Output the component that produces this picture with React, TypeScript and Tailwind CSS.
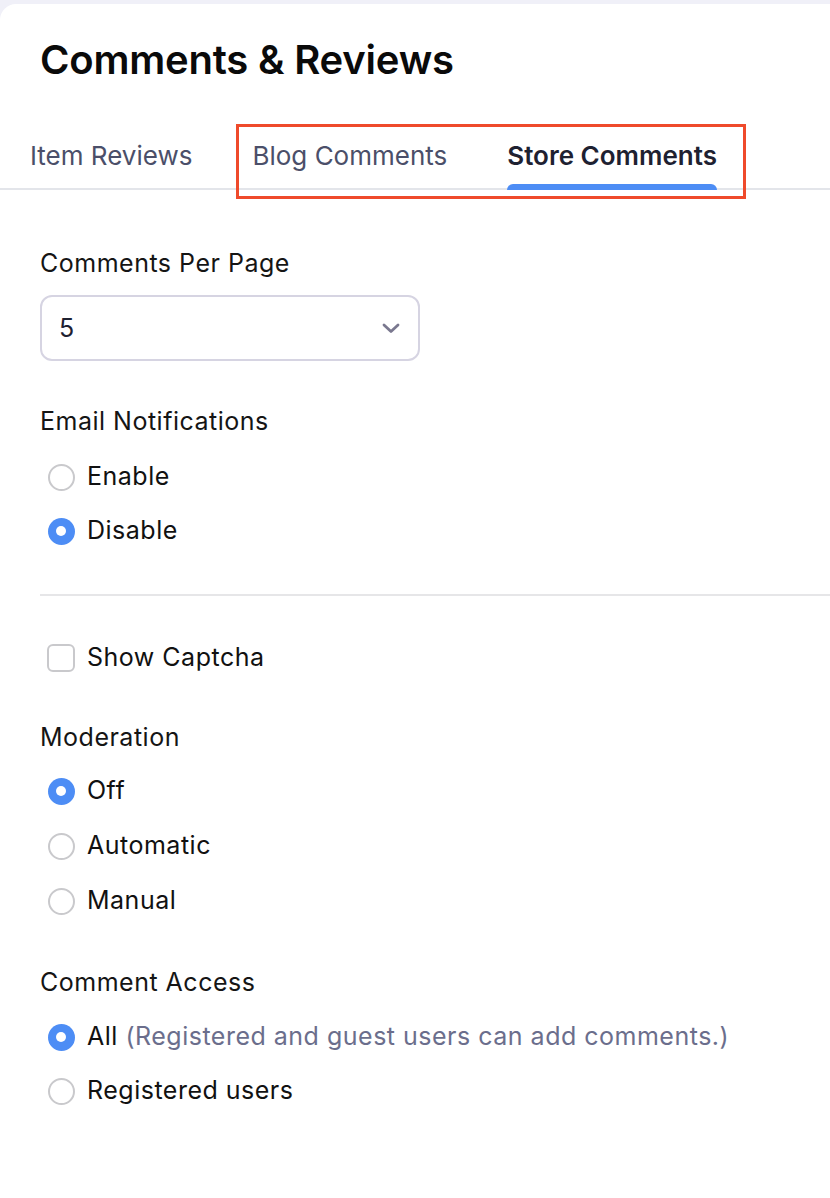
import { useState } from 'react'

type Option = { value: string; label: string; hint?: string }

function Radio({ checked, label, hint, onClick }: { checked: boolean; label: string; hint?: string; onClick: () => void }) {
  return (
    <div className="flex h-8 items-center cursor-pointer" onClick={onClick}>
      <span className="ml-[7px] flex h-7 w-7 shrink-0 items-center justify-center">
        {checked ? (
          <span className="flex h-[27px] w-[27px] items-center justify-center rounded-full bg-[#4d8df5]">
            <span className="h-2.5 w-2.5 rounded-full bg-white" />
          </span>
        ) : (
          <span className="h-[27px] w-[27px] rounded-full border-2 border-[#c9c9cc] bg-white" />
        )}
      </span>
      <span className="ml-[12px] text-[25px] tracking-[0.5px] text-[#111111]">
        {label}
        {hint && <span className="text-[#6b6e8c]"> {hint}</span>}
      </span>
    </div>
  )
}

function RadioGroup({ options, value, onChange, gap }: { options: Option[]; value: string; onChange: (v: string) => void; gap: string }) {
  return (
    <div className={`flex flex-col ${gap}`}>
      {options.map((o) => (
        <Radio key={o.value} checked={value === o.value} label={o.label} hint={o.hint} onClick={() => onChange(o.value)} />
      ))}
    </div>
  )
}

export default function App() {
  const [tab, setTab] = useState('store')
  const [email, setEmail] = useState('disable')
  const [captcha, setCaptcha] = useState(false)
  const [moderation, setModeration] = useState('off')
  const [access, setAccess] = useState('all')

  const tabs = [
    { id: 'item', label: 'Item Reviews' },
    { id: 'blog', label: 'Blog Comments' },
    { id: 'store', label: 'Store Comments' },
  ]

  return (
    <div className="min-h-[1198px] bg-[#f0f0f8] pt-1 font-['Inter','Noto_Sans',sans-serif]">
      <div className="min-h-[1194px] rounded-tl-2xl bg-white pt-8">
        <h1 className="pl-10 text-[40px] leading-[48px] font-semibold text-[#0a0a0a] tracking-[-0.2px]">
          Comments &amp; Reviews
        </h1>

        {/* Tabs */}
        <div className="relative mt-10 flex gap-[60px] border-b-2 border-[#e3e5ea] pl-[30px] pt-4 pb-4">
          {tabs.map((t) => {
            const active = t.id === tab
            return (
              <button
                key={t.id}
                onClick={() => setTab(t.id)}
                className={`relative text-[26px] leading-8 ${active ? 'font-semibold text-[#1e2131]' : 'text-[#4b4f69]'}`}
              >
                {t.label}
                {active && <span className="absolute left-0 right-0 bottom-[-18px] h-1.5 rounded-t-md bg-[#4d8df5]" />}
              </button>
            )
          })}
          {/* annotation box */}
          <div className="pointer-events-none absolute left-[236px] top-0 h-[75px] w-[510px] border-[3px] border-[#ef4a2b]" />
        </div>

        <div className="pl-10 pt-[57px]">
          <div className="text-[25px] leading-8 tracking-[0.5px] text-[#151515]">Comments Per Page</div>
          <div className="mt-4 flex h-[66px] w-[380px] items-center justify-between rounded-xl border-2 border-[#d6d4e2] pl-[17px] pr-[17px]">
            <span className="pt-0.5 text-[25px] text-[#1e2131]">5</span>
            <svg width="20" height="12" viewBox="0 0 20 12" fill="none">
              <path d="M3 3L10 9.5L17 3" stroke="#7a788f" strokeWidth="2.8" strokeLinecap="round" strokeLinejoin="round" />
            </svg>
          </div>

          <div className="mt-11 text-[25px] leading-8 tracking-[0.5px] text-[#151515]">Email Notifications</div>
          <div className="mt-6">
            <RadioGroup
              gap="gap-[22px]"
              value={email}
              onChange={setEmail}
              options={[
                { value: 'enable', label: 'Enable' },
                { value: 'disable', label: 'Disable' },
              ]}
            />
          </div>

          <div className="mt-[47px] h-0.5 bg-[#e6e6e8]" />

          <div className="mt-[46px] flex h-8 items-center cursor-pointer" onClick={() => setCaptcha(!captcha)}>
            <span className={`ml-[7px] flex h-7 w-7 items-center justify-center rounded-md border-2 ${captcha ? 'border-[#4d8df5] bg-[#4d8df5]' : 'border-[#c9c9cc] bg-white'}`} />
            <span className="ml-[12px] text-[25px] tracking-[0.5px] text-[#111111]">Show Captcha</span>
          </div>

          <div className="mt-[47px] text-[25px] leading-8 tracking-[0.5px] text-[#151515]">Moderation</div>
          <div className="mt-[22px]">
            <RadioGroup
              gap="gap-[23px]"
              value={moderation}
              onChange={setModeration}
              options={[
                { value: 'off', label: 'Off' },
                { value: 'auto', label: 'Automatic' },
                { value: 'manual', label: 'Manual' },
              ]}
            />
          </div>

          <div className="mt-[49px] text-[25px] leading-8 tracking-[0.5px] text-[#151515]">Comment Access</div>
          <div className="mt-[23px]">
            <RadioGroup
              gap="gap-[22px]"
              value={access}
              onChange={setAccess}
              options={[
                { value: 'all', label: 'All', hint: '(Registered and guest users can add comments.)' },
                { value: 'registered', label: 'Registered users' },
              ]}
            />
          </div>
        </div>
      </div>
    </div>
  )
}
